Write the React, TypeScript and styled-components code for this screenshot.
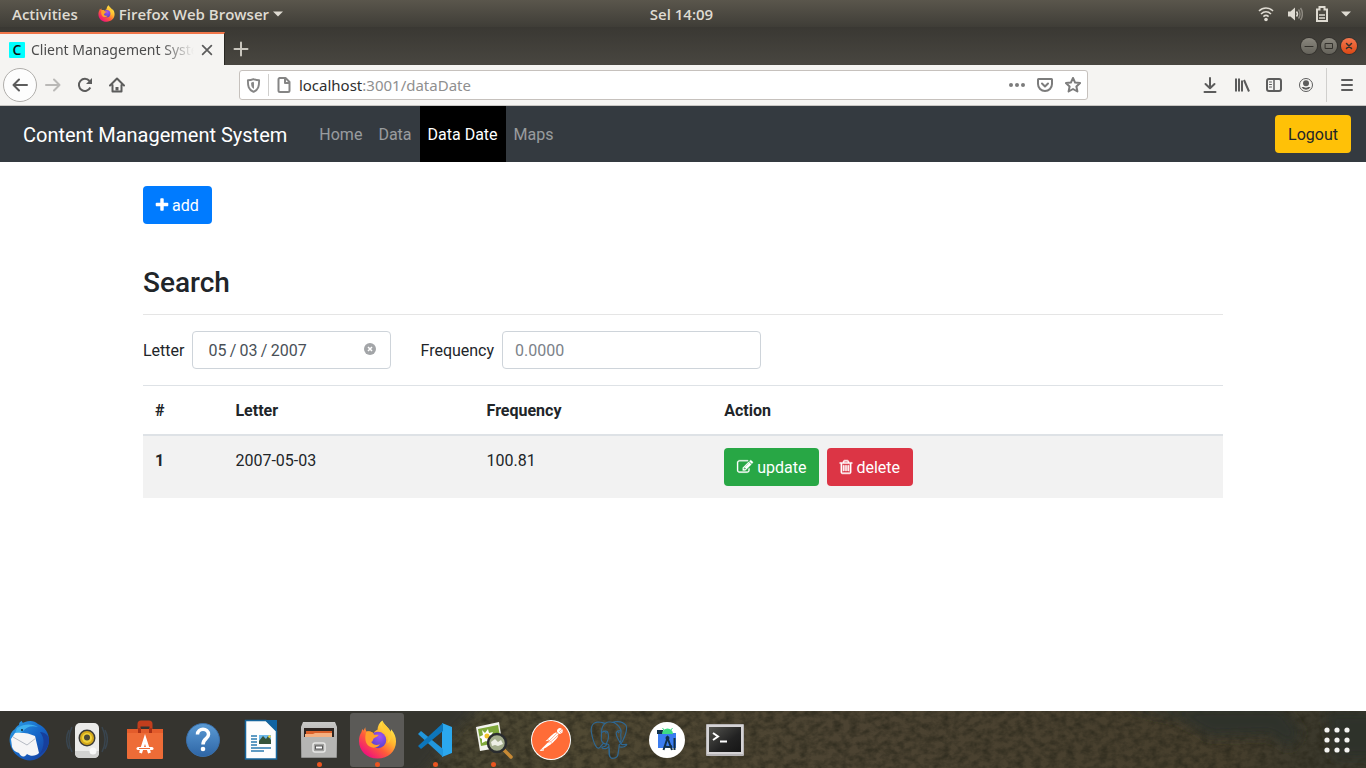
import React from 'react';
import styled, { createGlobalStyle, css } from 'styled-components';
import { SiPostgresql, SiPostman } from 'react-icons/si';

const chromeFont = '"Noto Sans", "Open Sans", sans-serif';

const GlobalStyle = createGlobalStyle`
  *, *::before, *::after { box-sizing: border-box; }
  body {
    margin: 0;
    background: #fff;
    color: #212529;
    font: 400 16px/24px Roboto, sans-serif;
  }
  button, input { font: inherit; }
  svg { display: block; flex: none; }
`;

const Desktop = styled.div`
  display: flex;
  flex-direction: column;
  min-height: 100vh;
`;

/* ---------- system bar ---------- */

const SystemBar = styled.header`
  display: grid;
  grid-template-columns: 1fr auto 1fr;
  align-items: center;
  height: 27px;
  padding: 0 15px 0 12px;
  background: linear-gradient(#5a564c, #3f3d37);
  color: #dfdbd2;
  font: 600 15px/20px "Open Sans", sans-serif;
`;

const SystemGroup = styled.div<{ $end?: boolean }>`
  display: flex;
  align-items: center;
  gap: ${(p) => (p.$end ? '13px' : '20px')};
  justify-content: ${(p) => (p.$end ? 'flex-end' : 'flex-start')};
`;

const SystemButton = styled.button`
  display: flex;
  align-items: center;
  gap: 4px;
  padding: 0;
  border: 0;
  background: none;
  color: inherit;
`;

/* ---------- window title bar ---------- */

const TitleBar = styled.div`
  display: flex;
  align-items: stretch;
  height: 38px;
  padding: 5px 9px 0 0;
  background: linear-gradient(#3a3833, #484640);
`;

const Tab = styled.div`
  display: flex;
  align-items: center;
  gap: 6px;
  width: 225px;
  padding: 0 10px 0 9px;
  border-top: 2px solid #f0764a;
  border-right: 1px solid #282722;
  background: #f5f4f2;
  color: #4c4c4c;
  font: 400 14px/20px ${chromeFont};
`;

const Favicon = styled.span`
  flex: none;
  width: 16px;
  height: 16px;
  border-radius: 1px;
  background: #0ff;
  color: #111;
  font: 600 14px/16px "Open Sans", sans-serif;
  text-align: center;
`;

const TabTitle = styled.span`
  flex: 1;
  overflow: hidden;
  white-space: nowrap;
  mask-image: linear-gradient(to right, #000 80%, transparent);
`;

const PlainButton = styled.button<{ $width?: number; $color?: string }>`
  display: flex;
  align-items: center;
  justify-content: center;
  flex: none;
  width: ${(p) => p.$width ?? 32}px;
  padding: 0;
  border: 0;
  background: none;
  color: ${(p) => p.$color ?? '#5c5c5c'};
`;

const WindowControls = styled.div`
  display: flex;
  align-items: center;
  gap: 4px;
  margin-left: auto;
  padding-bottom: 5px;
`;

const WindowButton = styled.button<{ $close?: boolean }>`
  display: flex;
  align-items: center;
  justify-content: center;
  width: 16px;
  height: 16px;
  padding: 0;
  border: 0;
  border-radius: 50%;
  background: ${(p) => (p.$close ? 'linear-gradient(#f4784f, #dd4814)' : 'linear-gradient(#8a877e, #65635b)')};
  box-shadow: 0 0 0 1px #34322e;
  color: #33312c;
`;

/* ---------- browser toolbar ---------- */

const Toolbar = styled.div`
  display: flex;
  align-items: center;
  height: 41px;
  padding: 0 3px;
  border-bottom: 1px solid #c8c6c3;
  background: #f5f4f2;
`;

const BackButton = styled(PlainButton)`
  height: 34px;
  border: 1px solid #b0aeab;
  border-radius: 50%;
  background: #fdfdfd;
`;

const Spacer = styled.div`
  flex: 1;
`;

const AddressBar = styled.div`
  display: flex;
  align-items: center;
  flex: 8;
  height: 30px;
  border: 1px solid #c6c1bd;
  border-radius: 3px;
  background: #fff;
`;

const AddressText = styled.div`
  flex: 1;
  color: #8f8f8f;
  font: 400 15px/20px ${chromeFont};
  span { color: #2e2e2e; }
`;

const Rule = styled.span<{ $height: number; $gap?: number }>`
  width: 1px;
  height: ${(p) => p.$height}px;
  margin: 0 ${(p) => p.$gap ?? 0}px;
  background: #d0cfcd;
`;

/* ---------- page ---------- */

const Navbar = styled.nav`
  display: flex;
  align-items: stretch;
  height: 56px;
  padding: 0 15px 0 23px;
  background: #343a40;
`;

const Brand = styled.a`
  align-self: center;
  margin-right: 24px;
  padding-top: 2px;
  color: #fff;
  font-size: 20px;
  line-height: 30px;
  text-decoration: none;
`;

const NavLink = styled.a<{ $active?: boolean }>`
  display: flex;
  align-items: center;
  padding: 2px 8px 0;
  background: ${(p) => (p.$active ? '#000' : 'none')};
  color: ${(p) => (p.$active ? '#fff' : 'rgba(255, 255, 255, 0.5)')};
  text-decoration: none;
`;

const tones = {
  primary: css`background: #007bff; color: #fff;`,
  success: css`background: #28a745; color: #fff;`,
  danger: css`background: #dc3545; color: #fff;`,
  warning: css`background: #ffc107; color: #212529;`,
};

const Button = styled.button<{ $tone: keyof typeof tones }>`
  display: inline-flex;
  align-items: center;
  gap: 4px;
  height: 38px;
  padding: 2px 13px 0;
  border: 0;
  border-radius: 4px;
  ${(p) => tones[p.$tone]}
  svg { overflow: visible; margin-bottom: 2px; }
`;

const NavEnd = styled.div`
  display: flex;
  align-items: center;
  margin-left: auto;
`;

const Page = styled.main`
  flex: 1;
  width: 100%;
  max-width: 1140px;
  margin: 0 auto;
  padding: 24px 30px;
`;

const Heading = styled.h1`
  margin: 42px 0 0;
  padding-bottom: 14px;
  border-bottom: 1px solid #e5e5e5;
  font-size: 28px;
  font-weight: 500;
  line-height: 34px;
`;

const SearchForm = styled.form`
  display: flex;
  flex-wrap: wrap;
  gap: 29px;
  margin: 16px 0;
`;

const Field = styled.div`
  display: flex;
  align-items: center;
  gap: 8px;
  label { padding-top: 2px; }
`;

const InputBox = styled.div<{ $width: number; $inset: number }>`
  display: flex;
  align-items: center;
  width: ${(p) => p.$width}px;
  height: 38px;
  padding: 0 12px 0 ${(p) => p.$inset}px;
  border: 1px solid #ced4da;
  border-radius: 4px;
`;

const Input = styled.input`
  flex: 1;
  min-width: 0;
  padding: 2px 0 0;
  border: 0;
  outline: 0;
  background: none;
  color: #495057;
  &::placeholder { color: #7b8289; opacity: 1; }
`;

const ClearButton = styled(PlainButton)`
  padding-bottom: 2px;
`;

const Table = styled.table`
  width: 100%;
  table-layout: fixed;
  border-collapse: separate;
  border-spacing: 0;
  text-align: left;
  th, td { padding: 13px 12px 11px; vertical-align: top; }
  thead th { border-top: 1px solid #dee2e6; border-bottom: 2px solid #dee2e6; }
  tbody tr { background: #f2f2f2; }
  tbody td:last-child { padding: 12px; }
`;

const Column = styled.col<{ $share?: string }>`
  width: ${(p) => p.$share ?? 'auto'};
`;

const Actions = styled.div`
  display: flex;
  gap: 8px;
`;

/* ---------- dock ---------- */

const DockBar = styled.footer`
  position: relative;
  display: flex;
  align-items: center;
  gap: 4px;
  height: 57px;
  padding: 0 2px;
  overflow: hidden;
  background: #35342f;
`;

const DockTexture = styled.svg`
  position: absolute;
  inset: 0;
  width: 100%;
  height: 100%;
`;

const DockItem = styled.button<{ $active?: boolean; $last?: boolean }>`
  position: relative;
  display: flex;
  align-items: center;
  justify-content: center;
  width: 54px;
  height: 54px;
  margin-left: ${(p) => (p.$last ? 'auto' : '0')};
  padding: 0;
  border: 0;
  border-radius: 3px;
  background: ${(p) => (p.$active ? '#5b5a57' : 'none')};
`;

const RunningDot = styled.span`
  position: absolute;
  bottom: 0;
  width: 5px;
  height: 5px;
  border-radius: 50%;
  background: #e95420;
`;

/* ---------- icons ---------- */

const Stroke = ({ size = 16, width = 2, children }: { size?: number; width?: number; children: React.ReactNode }) => (
  <svg width={size} height={size} viewBox="0 0 16 16" fill="none" stroke="currentColor" strokeWidth={width} strokeLinecap="round" strokeLinejoin="round">
    {children}
  </svg>
);

const Awesome = ({ box, width, d, bold = 0 }: { box: string; width: number; d: string; bold?: number }) => (
  <svg width={width} height="16" viewBox={box} fill="currentColor" stroke="currentColor" strokeWidth={bold}><path d={d} /></svg>
);

const PlusIcon = () => (
  <Awesome box="224 0 1344 1792" width={12} d="M1600 736v192q0 40-28 68t-68 28h-416v416q0 40-28 68t-68 28h-192q-40 0-68-28t-28-68v-416h-416q-40 0-68-28t-28-68v-192q0-40 28-68t68-28h416v-416q0-40 28-68t68-28h192q40 0 68 28t28 68v416h416q40 0 68 28t28 68z" />
);
const EditIcon = () => (
  <Awesome box="0 0 1792 1792" width={16} bold={30} d="M888 1184l116-116-152-152-116 116v56h96v96h56zm440-720q-16-16-33 1l-350 350q-17 17-1 33t33-1l350-350q17-17 1-33zm80 594v190q0 119-84.5 203.5t-203.5 84.5h-832q-119 0-203.500-84.500t-84.500-203.500v-832q0-119 84.500-203.500t203.500-84.500h832q63 0 117 25 15 7 18 23 3 17-9 29l-49 49q-14 14-32 8-23-6-45-6h-832q-66 0-113 47t-47 113v832q0 66 47 113t113 47h832q66 0 113-47t47-113v-126q0-13 9-22l64-64q15-15 35-7t20 29zm-96-738l288 288-672 672h-288v-288zm444 132l-92 92-288-288 92-92q28-28 68-28t68 28l152 152q28 28 28 68t-28 68z" />
);
const TrashIcon = () => (
  <Awesome box="224 0 1344 1792" width={12} bold={60} d="M704 736v576q0 14-9 23t-23 9h-64q-14 0-23-9t-9-23v-576q0-14 9-23t23-9h64q14 0 23 9t9 23zm256 0v576q0 14-9 23t-23 9h-64q-14 0-23-9t-9-23v-576q0-14 9-23t23-9h64q14 0 23 9t9 23zm256 0v576q0 14-9 23t-23 9h-64q-14 0-23-9t-9-23v-576q0-14 9-23t23-9h64q14 0 23 9t9 23zm128 724v-948h-896v948q0 22 7 40.5t14.5 27 10.5 8.5h832q3 0 10.5-8.5t14.5-27 7-40.5zm-672-1076h448l-48-117q-7-9-17-11h-317q-10 2-17 11zm928 32v64q0 14-9 23t-23 9h-96v948q0 83-47 143.5t-113 60.5h-832q-66 0-113-58.5t-47-141.5v-952h-96q-14 0-23-9t-9-23v-64q0-14 9-23t23-9h309l70-167q15-37 54-63t79-26h320q40 0 79 26t54 63l70 167h309q14 0 23 9t9 23z" />
);

const Caret = () => (
  <svg width="10" height="6" viewBox="0 0 10 6" fill="currentColor"><path d="M0 0.500h10L5 5.500z" /></svg>
);

const FirefoxIcon = ({ size, id }: { size: number; id: string }) => (
  <svg width={size} height={size} viewBox="0 0 40 40">
    <defs>
      <linearGradient id={`${id}f`} x1="0.85" y1="0.1" x2="0.2" y2="0.9">
        <stop offset="0" stopColor="#fff04f" />
        <stop offset="0.35" stopColor="#ffb52e" />
        <stop offset="0.65" stopColor="#ff5b3a" />
        <stop offset="1" stopColor="#f0147a" />
      </linearGradient>
      <radialGradient id={`${id}p`} cx="0.6" cy="0.3" r="0.8">
        <stop offset="0" stopColor="#a452f5" />
        <stop offset="1" stopColor="#4a3fc4" />
      </radialGradient>
    </defs>
    <path fill={`url(#${id}f)`} d="M25 0.500c1 3 4 5 6.500 8.500 0 0 1 1.500 1.500 3 1-1 1-2.500 1-2.500 3.500 4 5 8 5 12.500C39 32 31 39.500 20 39.500S1 31.500 1 21.500c0-4 1-6.500 2.500-9l1-3.500 1 2 2-3.500c0 2 .5 3.500 1.500 4.500 3-.8 5 0 7 1.500 1-2 2.500-3 4-3.500 0-3.500 2-7.500 5-9.500z" />
    <circle cx="20.500" cy="20.500" r="8.500" fill={`url(#${id}p)`} />
    <path fill="#ffa12b" d="M8.500 12c3.500-1.500 7 .5 8 3h4.500c.5 1.500-4 3-5 4-.8 1.500-.5 3-2.500 3.500 2 3 6 4 9 2-2 4-7 5-11 2.500-4-2.700-5-9-3-15z" />
    <path fill="#ffcb35" d="M25 1c-1 5 .5 8 3.500 11s3.500 8 1.500 12c4-2 5-8 3-13-1-3-6-5-8-10z" />
  </svg>
);

const WifiIcon = () => (
  <svg width="16" height="16" viewBox="0 0 16 16" fill="none" stroke="#dfdbd2" strokeWidth="1.600">
    <path d="M1 5c4-4 10-4 14 0M3 8c3-2.800 7-2.800 10 0M5.400 10.600c1.600-1.500 3.600-1.500 5.200 0" />
    <circle cx="8" cy="13.500" r="1.800" fill="#dfdbd2" stroke="none" />
  </svg>
);
const VolumeIcon = () => (
  <svg width="16" height="16" viewBox="0 0 16 16" fill="none" strokeWidth="1.500">
    <path d="M1 5.500h2.500L8 1.500v13l-4.500-4H1z" fill="#dfdbd2" />
    <path d="M9.500 5.500c1.200 1.500 1.200 3.500 0 5" stroke="#dfdbd2" />
    <path d="M11.500 3.500c2 2.500 2 6.500 0 9M13.500 2c2.500 3.500 2.500 8.500 0 12" stroke="#8c887f" />
  </svg>
);
const BatteryIcon = () => (
  <svg width="12" height="16" viewBox="0 0 12 16" fill="none" stroke="#dfdbd2" strokeWidth="2">
    <path d="M1 3.500h2.500V1h5v2.500H11V15H1z" />
    <path d="M3 9h6M3 12h6" strokeWidth="1.500" />
  </svg>
);

const Mail = () => (
  <svg width="42" height="42" viewBox="0 0 42 42">
    <defs>
      <linearGradient id="bird" x1="0" y1="0" x2="1" y2="1">
        <stop offset="0" stopColor="#2fa2e8" /><stop offset="0.5" stopColor="#1667c8" /><stop offset="1" stopColor="#183a98" />
      </linearGradient>
    </defs>
    <path fill="url(#bird)" d="M11 6c0-3 2-4 3-4 0 2 1 2 3 1 5-2 10-1 13 2 7 3 11 9 11 16 0 9-6 17-15 20-9 2-18-3-22-11C0 22 1 14 7 10c1-2 2-3 4-4z" />
    <path fill="#3fb0ee" d="M9 9c8-5 16-4 21-1-7-2-11 0-15 4L6 17z" />
    <path fill="#173f9c" d="M32 13c5 6 5 15-1 23 7-4 10-9 10-15 0-4-4-8-9-8z" />
    <path fill="#f5f5f6" d="M3 20l4-6c7-1 14 0 20 3l4 17c-3 3-8 4-12 1-3 4-6 3-8-1-4-1-6-3-7-6z" />
    <path d="M5 18l14 8 9-7" fill="none" stroke="#b5bac3" strokeWidth="1" />
    <circle cx="14" cy="11" r="1" fill="#123" />
  </svg>
);
const Speaker = () => (
  <svg width="42" height="42" viewBox="0 0 42 42">
    <path d="M6 8c-4 8-4 17 0 25M3 11c-3 6-3 13 0 19M36 8c4 8 4 17 0 25M39 11c3 6 3 13 0 19" fill="none" stroke="#39454f" strokeWidth="1.500" />
    <rect x="9" y="4" width="24" height="35" rx="5" fill="#ebebe9" />
    <path d="M9 32h24v2q0 5-5 5H14q-5 0-5-5z" fill="#d2d2d0" />
    <circle cx="21" cy="19" r="8.500" fill="#3b3b37" />
    <circle cx="21" cy="19" r="7" fill="#d4a81a" />
    <circle cx="21" cy="19" r="5" fill="#f0d23a" />
    <circle cx="21" cy="18.500" r="3" fill="#4d4a36" />
    <circle cx="27" cy="32" r="3.500" fill="#f9f9f8" />
  </svg>
);
const SoftwareBag = () => (
  <svg width="40" height="42" viewBox="0 0 40 42">
    <rect x="2" y="10" width="36" height="30" rx="1" fill="#ee6c37" />
    <path d="M2 10h36v4H2z" fill="#e35c2b" />
    <path d="M14 10V5q0-2 2-2h8q2 0 2 2v5M14 6h12" fill="none" stroke="#c23e1d" strokeWidth="3" />
    <path d="M13 9h3v5h-3zM24 9h3v5h-3z" fill="#a93116" />
    <path d="M15.500 34L20 20l4.500 14" fill="none" stroke="#fff" strokeWidth="3" />
    <path d="M13 29.500h14" stroke="#fff" strokeWidth="3" strokeLinecap="round" />
    <path d="M14 29.500h11" stroke="#ee6c37" strokeWidth="1" />
  </svg>
);
const Help = () => (
  <svg width="36" height="36" viewBox="0 0 36 36">
    <defs><linearGradient id="help" x2="0" y2="1"><stop offset="0" stopColor="#5b9bd5" /><stop offset="1" stopColor="#2e65a5" /></linearGradient></defs>
    <circle cx="18" cy="18" r="16.500" fill="url(#help)" stroke="#3a6ea8" />
    <path d="M12.500 12.500c0-7 11-7 11 0 0 4.500-5.500 4-5.500 10" fill="none" stroke="#fff" strokeWidth="3.500" />
    <circle cx="18" cy="27" r="2.300" fill="#fff" />
  </svg>
);
const Writer = () => (
  <svg width="34" height="42" viewBox="0 0 34 42">
    <path d="M1.500 1.500H22L32.500 12v28h-31z" fill="#fdfdfd" stroke="#16659c" strokeWidth="1.500" />
    <path d="M22 1h11v11z" fill="#1164a3" />
    <path d="M7 17h6M7 20h6M7 23h6M7 26h6M7 29h20M7 32h13" stroke="#2b7bb0" strokeWidth="1.500" />
    <rect x="15" y="16" width="12" height="9" fill="#6cb8e8" />
    <path d="M15 25v-3l4-5 3 3 2-3 3 4v4z" fill="#35543a" />
    <circle cx="25.500" cy="17.500" r="1.300" fill="#f5d33a" />
  </svg>
);
const Files = () => (
  <svg width="38" height="40" viewBox="0 0 38 40">
    <defs><linearGradient id="cab" x2="0" y2="1"><stop offset="0" stopColor="#c9c9c7" /><stop offset="1" stopColor="#8f8f8d" /></linearGradient></defs>
    <path d="M3 2h32l2 5v30q0 1-1 1H2q-1 0-1-1V7z" fill="url(#cab)" />
    <rect x="4" y="8" width="30" height="11" fill="#2c2420" />
    <path d="M6 11h26v7H6z" fill="#d9602a" />
    <path d="M5 14h8l2-1h17v5H5z" fill="#f5b080" />
    <path d="M2 17h34v20H2z" fill="#b5b5b3" />
    <rect x="13" y="23" width="12" height="9" rx="2" fill="#a2a2a0" stroke="#e8e8e6" strokeWidth="1.500" />
    <rect x="15.500" y="26" width="7" height="3" fill="#fff" stroke="#555" />
  </svg>
);
const Code = () => (
  <svg width="36" height="36" viewBox="0 0 36 36">
    <path d="M25 1l10 4v26l-10 4z" fill="#2ba8ee" />
    <path d="M1 12l3-3 22 18v8z" fill="#2196dc" />
    <path d="M1 24l3 3 22-18V1z" fill="#0d76bb" />
  </svg>
);
const ImageViewer = () => (
  <svg width="40" height="42" viewBox="0 0 40 42">
    <path d="M3 8l23-5 4 25-23 4z" fill="#f2f3ee" />
    <path d="M5 10l20-4 3 17-20 4z" fill="#7fa83a" />
    <path d="M9 11l3 3 3-4 1 4 4-1-2 4 3 3-4 1v3l-4-2-4 2v-4l-3-2 4-2z" fill="#fff" />
    <circle cx="14" cy="17" r="2.500" fill="#f2c32c" />
    <path d="M31 31l7 7" stroke="#c88a35" strokeWidth="3.500" strokeLinecap="round" />
    <circle cx="24" cy="24" r="9" fill="#a3ad8c" stroke="#2a2c2e" strokeWidth="2.500" />
    <path d="M18 23l4-3 3 3 3-2 2 4-5 2-3-1-3 1z" fill="#eef0e6" />
  </svg>
);
const PostmanBadge = () => (
  <svg width="40" height="40" viewBox="0 0 40 40">
    <circle cx="20" cy="20" r="20" fill="#fff" />
    <SiPostman x={1} y={1} size={38} color="#ff6c37" />
  </svg>
);
const AndroidStudio = () => (
  <svg width="36" height="36" viewBox="0 0 36 36">
    <circle cx="18" cy="18" r="18" fill="#fff" />
    <path d="M9 11h18v15H9z" fill="#3b7df0" />
    <path d="M8 8h6v4H8z" fill="#12324a" />
    <path d="M13 12a5.500 5.500 0 0 1 11 0z" fill="#3ddc84" />
    <path d="M15 8l-1.500-2M22 8l1.500-2" stroke="#3ddc84" strokeWidth="1" />
    <path d="M14.500 28l4-12 4.500 12M15 24q4 2 8 0M25.500 16v12" fill="none" stroke="#11304a" strokeWidth="2" />
    <circle cx="18.500" cy="16" r="2" fill="#11304a" />
  </svg>
);
const Terminal = () => (
  <svg width="38" height="32" viewBox="0 0 38 32">
    <defs><linearGradient id="term" x1="0" y1="0" x2="1" y2="1"><stop offset="0" stopColor="#54544f" /><stop offset="0.600" stopColor="#222" /><stop offset="1" stopColor="#151515" /></linearGradient></defs>
    <rect width="38" height="32" rx="1" fill="#b7b5b7" />
    <rect x="1" y="1" width="36" height="29" fill="#d5d3d5" />
    <rect x="3" y="3" width="32" height="25" fill="url(#term)" />
    <path d="M7 9l5 3.500L7 16M14 17.500h7" fill="none" stroke="#fff" strokeWidth="2" />
  </svg>
);
const AppGrid = () => (
  <svg width="26" height="26" viewBox="0 0 26 26" fill="#f4f4f2">
    {[3, 13, 23].map((y) => [3, 13, 23].map((x) => <circle key={`${x}-${y}`} cx={x} cy={y} r="2.600" />))}
  </svg>
);

const Elephant = () => <SiPostgresql size={38} color="#2f6792" />;

const dockApps = [
  { name: 'Thunderbird Mail', Icon: Mail },
  { name: 'Rhythmbox', Icon: Speaker },
  { name: 'Ubuntu Software', Icon: SoftwareBag },
  { name: 'Help', Icon: Help },
  { name: 'LibreOffice Writer', Icon: Writer },
  { name: 'Files', Icon: Files, running: true },
  { name: 'Firefox', Icon: () => <FirefoxIcon size={39} id="dock" />, running: true, active: true },
  { name: 'Visual Studio Code', Icon: Code, running: true },
  { name: 'Image Viewer', Icon: ImageViewer, running: true },
  { name: 'Postman', Icon: PostmanBadge },
  { name: 'PostgreSQL', Icon: Elephant },
  { name: 'Android Studio', Icon: AndroidStudio },
  { name: 'Terminal', Icon: Terminal },
];

const Dock = () => (
  <DockBar>
    <DockTexture viewBox="0 0 1366 57" preserveAspectRatio="none" aria-hidden="true">
      <defs>
        <linearGradient id="ground">
          <stop offset="0.290" stopColor="#35342f" />
          <stop offset="0.340" stopColor="#4a4632" />
          <stop offset="0.420" stopColor="#504933" />
          <stop offset="0.620" stopColor="#4c4332" />
          <stop offset="0.900" stopColor="#463e2c" />
          <stop offset="0.970" stopColor="#3a382c" />
        </linearGradient>
        <filter id="grain" x="0" y="0" width="1" height="1" colorInterpolationFilters="sRGB">
          <feTurbulence type="fractalNoise" baseFrequency="0.120 0.160" numOctaves="3" seed="4" />
          <feColorMatrix values="0 0 0 0 0.170  0 0 0 0 0.160  0 0 0 0 0.110  1.600 0 0 0 -0.550" />
        </filter>
        <filter id="soft"><feGaussianBlur stdDeviation="6" /></filter>
      </defs>
      <rect width="1366" height="57" fill="url(#ground)" />
      <rect x="430" width="936" height="57" filter="url(#grain)" />
      <path d="M390-10h100l-30 25-40 50h-60z" fill="#35342f" filter="url(#soft)" />
      <path d="M1120-4l60 12 30 18 60-2 20 14 12-16-20-26z" fill="#2f302a" filter="url(#soft)" />
      <path d="M1325 0h60v48h-50z" fill="#2f302a" filter="url(#soft)" />
    </DockTexture>
    {dockApps.map(({ name, Icon, running, active }) => (
      <DockItem key={name} aria-label={name} $active={active}>
        <Icon />
        {running && <RunningDot />}
      </DockItem>
    ))}
    <DockItem aria-label="Show applications" $last><AppGrid /></DockItem>
  </DockBar>
);

/* ---------- assembled screen ---------- */

const navLinks = ['Home', 'Data', 'Data Date', 'Maps'];
const rows = [{ id: 1, letter: '2007-05-03', frequency: '100.81' }];
const selectedDate = ['05', '03', '2007'].join('\u2009/\u2009');

const Browser = () => (
  <>
    <TitleBar>
      <Tab>
        <Favicon>C</Favicon>
        <TabTitle>Client Management System</TabTitle>
        <PlainButton $width={14} aria-label="Close tab">
          <Stroke size={14}><path d="M3 3l10 10M13 3L3 13" /></Stroke>
        </PlainButton>
      </Tab>
      <PlainButton $color="#c9c6be" aria-label="New tab">
        <Stroke><path d="M8 1.500v13M1.500 8h13" /></Stroke>
      </PlainButton>
      <WindowControls>
        <WindowButton aria-label="Minimize"><Stroke width={1}><path d="M4 8.500h8" /></Stroke></WindowButton>
        <WindowButton aria-label="Maximize"><Stroke width={1}><path d="M4.500 5.500h7v5h-7z" /></Stroke></WindowButton>
        <WindowButton $close aria-label="Close"><Stroke width={1.5}><path d="M5.500 5.500l5 5M10.500 5.500l-5 5" /></Stroke></WindowButton>
      </WindowControls>
    </TitleBar>
    <Toolbar>
      <BackButton $width={34} aria-label="Back"><Stroke><path d="M15 8H1.500M7 2.500L1.500 8 7 13.500" /></Stroke></BackButton>
      <PlainButton $color="#bab9b7" aria-label="Forward"><Stroke><path d="M1 8h13.500M9 2.500L14.500 8 9 13.500" /></Stroke></PlainButton>
      <PlainButton aria-label="Reload">
        <svg width="16" height="16" viewBox="0 0 16 16" fill="none" stroke="currentColor" strokeWidth="2">
          <path d="M13.300 10.500A6 6 0 1 1 12.500 4" /><path d="M15 1v6H9z" fill="currentColor" stroke="none" />
        </svg>
      </PlainButton>
      <PlainButton aria-label="Home">
        <Stroke><path d="M1 8.500L8 1.500l7 7M3.500 8v6.500h9V8" /><path d="M8 10v3.500" strokeWidth="3" strokeLinecap="butt" /></Stroke>
      </PlainButton>
      <Spacer />
      <AddressBar>
        <PlainButton $width={28} $color="#858585" aria-label="Tracking protection">
          <Stroke size={15}><path d="M8 1.200c2 .8 4 1.200 6 1.200 0 6-.5 10-6 12.400C2.500 12.400 2 8.400 2 2.400c2 0 4-.4 6-1.200z" /><path d="M8 5v6C6.500 10 6 8.500 6 5.500z" fill="currentColor" strokeWidth="1" /></Stroke>
        </PlainButton>
        <Rule $height={22} />
        <PlainButton $width={30} $color="#858585" aria-label="Site information">
          <Stroke><path d="M3.500 1h6l4 4v8.500q0 1.500-1.500 1.500H4q-1.500 0-1.500-1.500v-11Q2.500 1 4 1zM9 1.500V6h4.500" /></Stroke>
        </PlainButton>
        <AddressText><span>localhost</span>:3001/dataDate</AddressText>
        <PlainButton $width={28} $color="#7c7c7c" aria-label="Page actions">
          <svg width="18" height="6" viewBox="0 0 18 6" fill="currentColor"><circle cx="3" cy="3" r="2" /><circle cx="9" cy="3" r="2" /><circle cx="15" cy="3" r="2" /></svg>
        </PlainButton>
        <PlainButton $width={28} $color="#7c7c7c" aria-label="Save to Pocket">
          <Stroke><path d="M1.500 2h13q.5 0 .5.500V7A7 7 0 0 1 1 7V2.500q0-.5.500-.5z" /><path d="M5 6.500l3 3 3-3" /></Stroke>
        </PlainButton>
        <PlainButton $width={28} $color="#7c7c7c" aria-label="Bookmark">
          <Stroke><path d="M8 1l2.100 4.600 5 .5-3.700 3.400 1 5L8 12l-4.400 2.500 1-5L.9 6.100l5-.5z" /></Stroke>
        </PlainButton>
      </AddressBar>
      <Spacer />
      <PlainButton aria-label="Downloads"><Stroke><path d="M8 1v10M3.500 7L8 11.300 12.500 7M2.500 15h11" /></Stroke></PlainButton>
      <PlainButton aria-label="Library">
        <svg width="16" height="16" viewBox="0 0 16 16" stroke="currentColor" strokeWidth="2"><path d="M2 1.500v13M5 1.500v13M8 3.500v11M10 3l5 11.500" /></svg>
      </PlainButton>
      <PlainButton aria-label="Sidebars">
        <Stroke><rect x="1" y="2" width="14" height="12" rx="2" /><path d="M8 2.500v11" strokeWidth="1.500" /><path d="M3.500 5h2M3.500 7.500h2M3.500 10h2" strokeWidth="1" /></Stroke>
      </PlainButton>
      <PlainButton aria-label="Account">
        <svg width="16" height="16" viewBox="0 0 16 16" fill="currentColor"><circle cx="8" cy="8" r="6.500" fill="none" stroke="currentColor" /><circle cx="8" cy="6.200" r="3" /><path d="M3.500 10h2.200q2.300 1.500 4.600 0h2.200a5 5 0 0 1-9 0z" /></svg>
      </PlainButton>
      <Rule $height={34} $gap={4} />
      <PlainButton aria-label="Menu"><Stroke><path d="M3 3h10M3 8h10M3 13h10" /></Stroke></PlainButton>
    </Toolbar>
  </>
);

export default function App() {
  return (
    <Desktop>
      <GlobalStyle />
      <SystemBar>
        <SystemGroup>
          <SystemButton>Activities</SystemButton>
          <SystemButton><FirefoxIcon size={17} id="top" /> Firefox Web Browser <Caret /></SystemButton>
        </SystemGroup>
        <time>Sel 14:09</time>
        <SystemGroup $end><WifiIcon /><VolumeIcon /><BatteryIcon /><Caret /></SystemGroup>
      </SystemBar>
      <Browser />
      <Navbar>
        <Brand href="#">Content Management System</Brand>
        {navLinks.map((label) => (
          <NavLink key={label} href="#" $active={label === 'Data Date'}>{label}</NavLink>
        ))}
        <NavEnd><Button $tone="warning">Logout</Button></NavEnd>
      </Navbar>
      <Page>
        <Button $tone="primary"><PlusIcon />add</Button>
        <Heading>Search</Heading>
        <SearchForm>
          <Field>
            <label htmlFor="letter">Letter</label>
            <InputBox $width={199} $inset={15}>
              <Input id="letter" defaultValue={selectedDate} />
              <ClearButton type="button" $width={16} $color="#a3a5a8" aria-label="Clear date">
                <svg width="12" height="12" viewBox="0 0 12 12"><circle cx="6" cy="6" r="6" fill="currentColor" /><path d="M4 4l4 4M8 4L4 8" stroke="#fff" strokeWidth="1.500" /></svg>
              </ClearButton>
            </InputBox>
          </Field>
          <Field>
            <label htmlFor="frequency">Frequency</label>
            <InputBox $width={259} $inset={12}>
              <Input id="frequency" placeholder="0.0000" />
            </InputBox>
          </Field>
        </SearchForm>
        <Table>
          <colgroup><Column $share="7.45%" /><Column $share="23.25%" /><Column $share="22%" /><Column /></colgroup>
          <thead>
            <tr><th scope="col">#</th><th scope="col">Letter</th><th scope="col">Frequency</th><th scope="col">Action</th></tr>
          </thead>
          <tbody>
            {rows.map((row) => (
              <tr key={row.id}>
                <th scope="row">{row.id}</th>
                <td>{row.letter}</td>
                <td>{row.frequency}</td>
                <td>
                  <Actions>
                    <Button $tone="success"><EditIcon />update</Button>
                    <Button $tone="danger"><TrashIcon />delete</Button>
                  </Actions>
                </td>
              </tr>
            ))}
          </tbody>
        </Table>
      </Page>
      <Dock />
    </Desktop>
  );
}
